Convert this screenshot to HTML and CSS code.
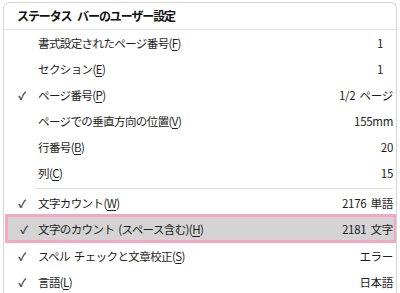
FILE: index.html
```html
<!DOCTYPE html>
<html lang="ja">
<head>
<meta charset="utf-8">
<link rel="stylesheet" href="styles.css">
</head>
<body>
<div class="menu">
  <div class="header">ステータス バーのユーザー設定</div>
  <div class="row"><span class="check"></span><span class="label">書式設定されたページ番号(<u>F</u>)</span><span class="value one">1</span></div>
  <div class="row"><span class="check"></span><span class="label">セクション(<u>E</u>)</span><span class="value one">1</span></div>
  <div class="row"><span class="check">✓</span><span class="label">ページ番号(<u>P</u>)</span><span class="value">1/2 ページ</span></div>
  <div class="row"><span class="check"></span><span class="label">ページでの垂直方向の位置(<u>V</u>)</span><span class="value">155mm</span></div>
  <div class="row"><span class="check"></span><span class="label">行番号(<u>B</u>)</span><span class="value">20</span></div>
  <div class="row"><span class="check"></span><span class="label">列(<u>C</u>)</span><span class="value">15</span></div>
  <div class="sep"></div>
  <div class="row short"><span class="check">✓</span><span class="label">文字カウント(<u>W</u>)</span><span class="value">2176 単語</span></div>
  <div class="row hl"><span class="check">✓</span><span class="label">文字のカウント (スペース含む)(<u>H</u>)</span><span class="value">2181 文字</span></div>
  <div class="row"><span class="check">✓</span><span class="label">スペル チェックと文章校正(<u>S</u>)</span><span class="value">エラー</span></div>
  <div class="row"><span class="check">✓</span><span class="label">言語(<u>L</u>)</span><span class="value">日本語</span></div>
</div>
</body>
</html>
```
FILE: styles.css
```css
html, body {
  margin: 0;
  padding: 0;
  background: #ffffff;
  height: 293px;
  overflow: hidden;
}
body {
  font-family: "Noto Sans CJK JP", "Noto Sans", sans-serif;
  color: #1e1e1e;
  font-size: 11.5px;
}
.menu {
  margin: 2px 3px 0 3px;
  border: 1px solid #d6d6d6;
  border-bottom: none;
  border-radius: 6px 6px 0 0;
  height: 291px;
  box-sizing: border-box;
  overflow: hidden;
  background: #fff;
}
.header {
  height: 26px;
  line-height: 25px;
  padding-left: 13px;
  font-weight: bold;
  font-size: 12px;
  letter-spacing: -1.1px;
  word-spacing: 4px;
  border-bottom: 1px solid #e3e3e3;
  color: #111;
}
.row {
  display: flex;
  align-items: center;
  height: 26px;
  letter-spacing: -0.6px;
  word-spacing: 2px;
}
.row.short {
  height: 22px;
}
.check {
  width: 34px;
  flex: none;
  text-align: center;
  font-size: 11px;
  font-weight: bold;
  color: #444;
  padding-left: 2px;
  box-sizing: border-box;
}
.label {
  flex: 1;
  white-space: nowrap;
}
.label u {
  text-decoration-thickness: 1px;
  text-underline-offset: 2px;
}
.value {
  flex: none;
  padding-right: 3px;
  white-space: nowrap;
  letter-spacing: -0.3px;
}
.value.one {
  padding-right: 13px;
}
.sep {
  height: 6px;
  margin-left: 31px;
  margin-right: 3px;
  background: linear-gradient(#e0e0e0, #e0e0e0) 0 2px / 100% 1px no-repeat;
}
.row.hl {
  height: 29px;
  margin: 0 -1px 0 1px;
  border: 3px solid #f4a7c3;
  background: #d4d4d4;
  box-sizing: border-box;
}
.row.hl .check {
  width: 30px;
}
.row.hl .value {
  padding-right: 1px;
}
```
